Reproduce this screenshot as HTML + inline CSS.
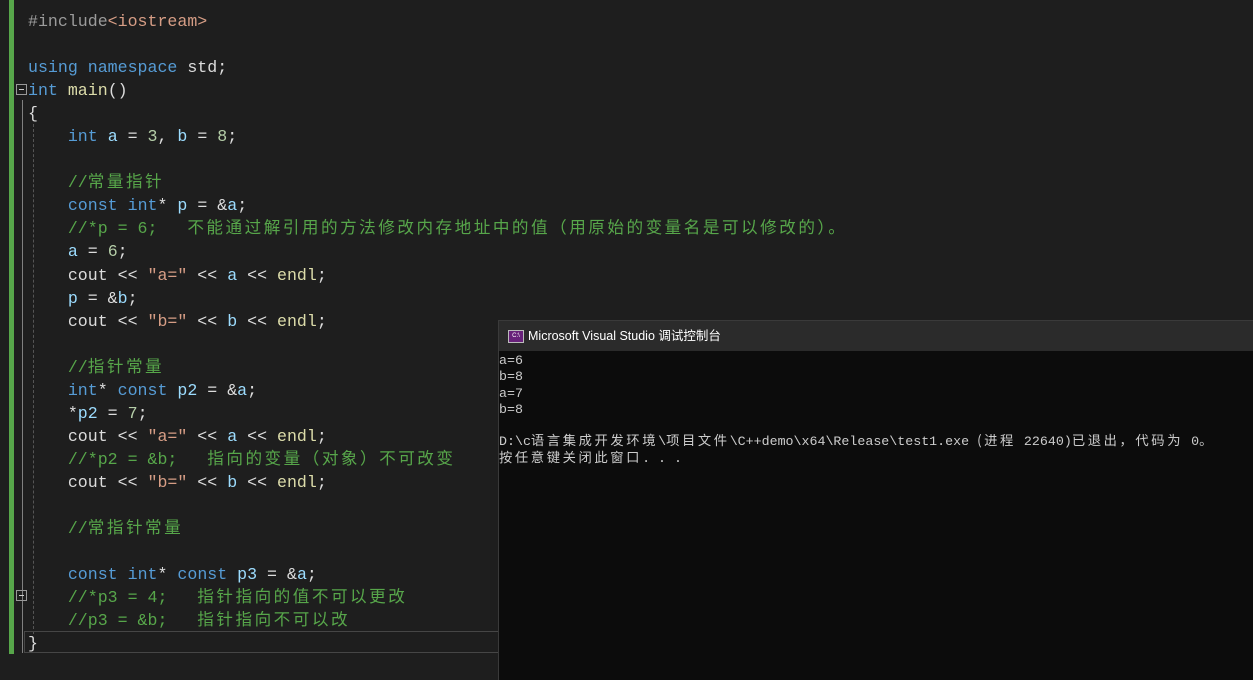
<!DOCTYPE html>
<html><head><meta charset="utf-8"><style>
body{margin:0;width:1253px;height:679px;background:#1e1e1e;overflow:hidden;position:relative;font-family:"Liberation Mono","Noto Sans CJK SC",monospace}
.bar{position:absolute;left:9px;top:0;width:5px;height:654px;background:#57a64a}
.vl{position:absolute;left:22px;top:100px;width:1px;height:553px;background:#808080}
.dg{position:absolute;left:33px;top:124px;height:510px;border-left:1px dashed #555}
.code{position:absolute;left:28px;top:10px;font-size:16.6px;color:#dcdcdc}
.code div{height:23.05px;line-height:23px;white-space:pre}
.k{color:#569cd6}.v{color:#9cdcfe}.c{color:#57a64a}.s{color:#d69d85}.n{color:#b5cea8}.f{color:#dcdcaa}.p{color:#9b9b9b}
.z{letter-spacing:2.5px;font-family:"Noto Sans CJK SC",sans-serif;line-height:0}
.box{position:absolute;width:9px;height:9px;border:1px solid #999;left:16px}
.box:after{content:"";position:absolute;left:2px;top:4px;width:5px;height:1px;background:#ccc}
.hl{position:absolute;left:24px;top:631px;width:474px;height:20px;border:1px solid #464646;border-right:none}
.con{position:absolute;left:498px;top:320px;width:755px;height:359px;background:#0c0c0c;border-top:1px solid #3a3a3a;border-left:1px solid #3a3a3a}
.tb{height:30px;background:#2b2b2b;color:#fff;font-family:"Liberation Sans","Noto Sans CJK SC",sans-serif;font-size:12.5px;line-height:30px;padding-left:29px;position:relative}
.ic{position:absolute;left:9px;top:9px;width:14px;height:11px;background:#68217a;border:1px solid #bbb;font-size:6px;line-height:11px;color:#fff;text-align:center}
.out{color:#ccc;font-size:13.3px;padding-top:2px}
.out div{height:16.3px;line-height:16.3px;white-space:pre}
.out .z{letter-spacing:2.6px}
</style></head><body>
<div class="bar"></div><div class="vl"></div><div class="dg"></div>
<div class="box" style="top:84px"></div><div class="box" style="top:590px"></div>
<div class="hl"></div>
<div class="code">
<div><span class="p">#include</span><span class="s">&lt;iostream&gt;</span></div>
<div> </div>
<div><span class="k">using</span> <span class="k">namespace</span> std;</div>
<div><span class="k">int</span> <span class="f">main</span>()</div>
<div>{</div>
<div>    <span class="k">int</span> <span class="v">a</span> = <span class="n">3</span>, <span class="v">b</span> = <span class="n">8</span>;</div>
<div> </div>
<div>    <span class="c">//<span class="z">常量指针</span></span></div>
<div>    <span class="k">const</span> <span class="k">int</span>* <span class="v">p</span> = &amp;<span class="v">a</span>;</div>
<div>    <span class="c">//*p = 6;   <span class="z">不能通过解引用的方法修改内存地址中的值（用原始的变量名是可以修改的）。</span></span></div>
<div>    <span class="v">a</span> = <span class="n">6</span>;</div>
<div>    cout &lt;&lt; <span class="s">"a="</span> &lt;&lt; <span class="v">a</span> &lt;&lt; <span class="f">endl</span>;</div>
<div>    <span class="v">p</span> = &amp;<span class="v">b</span>;</div>
<div>    cout &lt;&lt; <span class="s">"b="</span> &lt;&lt; <span class="v">b</span> &lt;&lt; <span class="f">endl</span>;</div>
<div> </div>
<div>    <span class="c">//<span class="z">指针常量</span></span></div>
<div>    <span class="k">int</span>* <span class="k">const</span> <span class="v">p2</span> = &amp;<span class="v">a</span>;</div>
<div>    *<span class="v">p2</span> = <span class="n">7</span>;</div>
<div>    cout &lt;&lt; <span class="s">"a="</span> &lt;&lt; <span class="v">a</span> &lt;&lt; <span class="f">endl</span>;</div>
<div>    <span class="c">//*p2 = &amp;b;   <span class="z">指向的变量（对象）不可改变</span></span></div>
<div>    cout &lt;&lt; <span class="s">"b="</span> &lt;&lt; <span class="v">b</span> &lt;&lt; <span class="f">endl</span>;</div>
<div> </div>
<div>    <span class="c">//<span class="z">常指针常量</span></span></div>
<div> </div>
<div>    <span class="k">const</span> <span class="k">int</span>* <span class="k">const</span> <span class="v">p3</span> = &amp;<span class="v">a</span>;</div>
<div>    <span class="c">//*p3 = 4;   <span class="z">指针指向的值不可以更改</span></span></div>
<div>    <span class="c">//p3 = &amp;b;   <span class="z">指针指向不可以改</span></span></div>
<div>}</div>
</div>
<div class="con"><div class="tb"><div class="ic">C:\</div>Microsoft Visual Studio 调试控制台</div>
<div class="out"><div>a=6</div><div>b=8</div><div>a=7</div><div>b=8</div><div> </div><div>D:\c<span class="z">语言集成开发环境</span>\<span class="z">项目文件</span>\C++demo\x64\Release\test1.exe <span class="z">(进程</span> 22640)<span class="z">已退出，代码为</span> 0<span class="z">。</span></div><div><span class="z">按任意键关闭此窗口</span>. . .</div></div></div>
</body></html>
